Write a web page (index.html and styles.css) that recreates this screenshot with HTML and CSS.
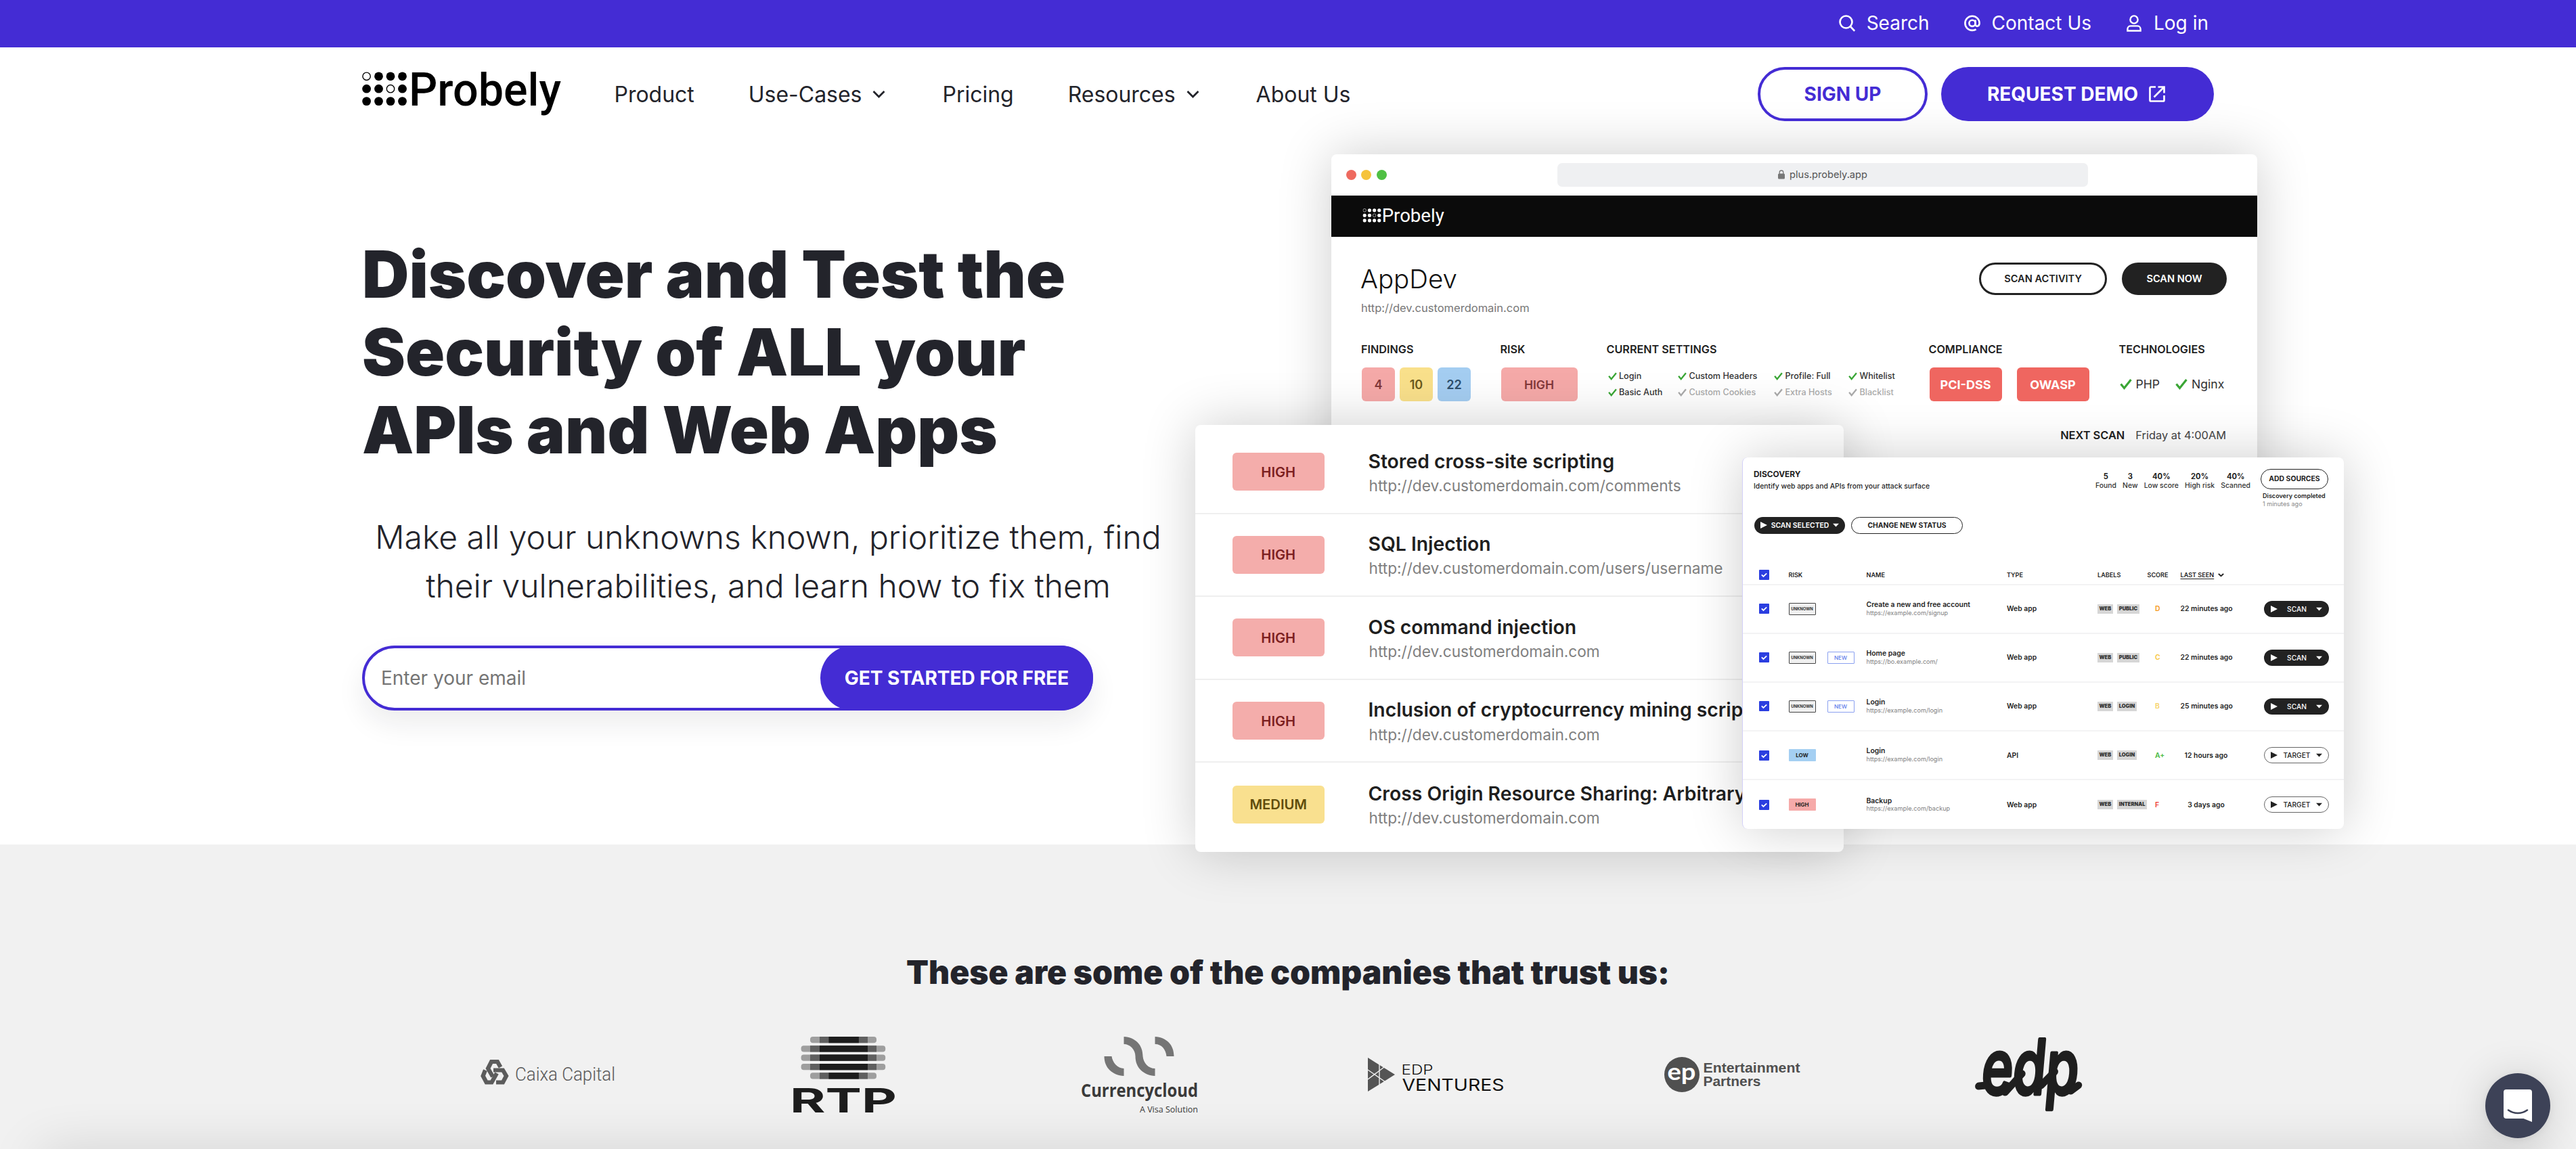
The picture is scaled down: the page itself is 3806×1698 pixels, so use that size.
FILE: index.html
```html
<!DOCTYPE html>
<html lang="en">
<head>
<meta charset="utf-8">
<title>Probely</title>
<link rel="stylesheet" href="styles.css">
</head>
<body>
<svg class="defs" aria-hidden="true">
  <symbol id="dots" viewBox="0 0 67 52">
    <g fill="currentColor">
      <circle cx="24.5" cy="6.8" r="6.4"/><circle cx="42" cy="6.8" r="6.4"/><circle cx="59.5" cy="6.8" r="6.4"/>
      <circle cx="6.6" cy="25.2" r="6.4"/><circle cx="24.5" cy="25.2" r="6.4"/><circle cx="59.5" cy="25.2" r="6.4"/>
      <circle cx="6.6" cy="43.6" r="6.4"/><circle cx="24.5" cy="43.6" r="6.4"/><circle cx="42" cy="43.6" r="6.4"/><circle cx="59.5" cy="43.6" r="6.4"/>
    </g>
    <g fill="none" stroke="currentColor" stroke-width="1.4"><circle cx="6.6" cy="6.8" r="5.7"/><circle cx="42" cy="25.2" r="5.7"/></g>
  </symbol>
  <symbol id="chev" viewBox="0 0 27 20"><path d="M5.5 6l8 8 8-8" fill="none" stroke="currentColor" stroke-width="2.8"/></symbol>
  <symbol id="tick" viewBox="0 0 18 18"><path d="M1.5 9.5l5 6L16.5 3" fill="none" stroke="currentColor" stroke-width="3.2"/></symbol>
  <symbol id="box" viewBox="0 0 15 15"><rect width="15" height="15" rx="1" fill="#2b3ee0"/><path d="M3.8 7.4l2.6 2.6 4.8-4.6" fill="none" stroke="#fff" stroke-width="1.8"/></symbol>
  <symbol id="play" viewBox="0 0 10 10"><path d="M0 0l10 5-10 5z" fill="currentColor"/></symbol>
  <symbol id="caret" viewBox="0 0 9 6"><path d="M0 .8h9L4.5 5.5z" fill="currentColor"/></symbol>
</svg>

<div class="topbar">
  <div class="container topbar-in">
    <a class="top-link"><svg width="24" height="25" viewBox="0 0 24 25" fill="none" stroke="#fff" stroke-width="2.6"><circle cx="10.5" cy="10.5" r="9"/><path d="M16.8 17l6.4 6.8"/></svg>Search</a>
    <a class="top-link"><svg width="24" height="25" viewBox="0 0 24 25" fill="none" stroke="#fff" stroke-width="2.6"><circle cx="12" cy="12.3" r="4.6"/><path d="M16.6 7.4v6.2c0 4.6 6 4 6-1.3A10.6 10.6 0 1 0 12 22.9c2.2 0 4-.5 5.6-1.5"/></svg>Contact Us</a>
    <a class="top-link"><svg width="24" height="25" viewBox="0 0 24 25" fill="none" stroke="#fff" stroke-width="2.4"><circle cx="12" cy="7" r="5.6"/><path d="M2.4 23.5v-2.5c0-3 2.4-4.6 4.6-4.6h10c2.2 0 4.6 1.6 4.6 4.6v2.5z"/></svg>Log in</a>
  </div>
</div>

<header class="header">
  <div class="container header-in">
    <svg class="logo" viewBox="0 0 296 66"><use href="#dots" width="67" height="52"/><text x="69" y="49.6" font-size="68" textLength="225" lengthAdjust="spacingAndGlyphs" class="logo-word">Probely</text></svg>
    <nav class="nav">
      <a>Product</a>
      <a>Use-Cases<svg class="chev"><use href="#chev"/></svg></a>
      <a>Pricing</a>
      <a>Resources<svg class="chev"><use href="#chev"/></svg></a>
      <a>About Us</a>
    </nav>
    <a class="btn btn-line">SIGN UP</a>
    <a class="btn btn-fill">REQUEST DEMO<svg width="24" height="24" viewBox="0 0 24 24" fill="none" stroke="#fff" stroke-width="2.7"><path d="M10 1.5H3a1.5 1.5 0 0 0-1.5 1.5v18A1.5 1.5 0 0 0 3 22.5h18a1.5 1.5 0 0 0 1.5-1.5v-7M13.5 1.5h9v9M22 2L7.5 16.5"/></svg></a>
  </div>
</header>

<section class="hero">
  <div class="container">
    <div class="pitch">
      <h1>Discover and Test the<br>Security of ALL your<br>APIs and Web Apps</h1>
      <p>Make all your unknowns known, prioritize them, find<br>their vulnerabilities, and learn how to fix them</p>
      <form class="signup">
        <input type="text" placeholder="Enter your email">
        <button type="button">GET STARTED FOR FREE</button>
      </form>
    </div>
  </div>

  <div class="win app">
    <div class="chrome">
      <div class="dots"><i class="r"></i><i class="y"></i><i class="g"></i></div>
      <div class="url"><svg width="10" height="14" viewBox="0 0 10 14"><rect y="5.5" width="10" height="8" rx="1.5" fill="#777"/><path d="M2.2 6V3.8a2.8 2.8 0 0 1 5.6 0V6" fill="none" stroke="#777" stroke-width="1.3"/></svg>plus.probely.app</div>
    </div>
    <div class="appbar"><svg class="logo-s" viewBox="0 0 296 66"><use href="#dots" width="67" height="52"/><text x="69" y="49.6" font-size="68" textLength="225" lengthAdjust="spacingAndGlyphs" class="logo-word">Probely</text></svg></div>
    <div class="app-body">
      <div class="app-top">
        <div class="app-name">AppDev</div>
        <span class="pill pill-o">SCAN ACTIVITY</span><span class="pill pill-f">SCAN NOW</span>
      </div>
      <div class="app-url">http://dev.customerdomain.com</div>
      <div class="app-cols">
        <div><h4>FINDINGS</h4><div class="tags"><b class="tag red">4</b><b class="tag yel">10</b><b class="tag blu">22</b></div></div>
        <div><h4>RISK</h4><div class="tags"><b class="tag red wide">HIGH</b></div></div>
        <div><h4>CURRENT SETTINGS</h4>
          <div class="settings">
            <span><svg><use href="#tick"/></svg>Login</span><span><svg><use href="#tick"/></svg>Custom Headers</span><span><svg><use href="#tick"/></svg>Profile: Full</span><span><svg><use href="#tick"/></svg>Whitelist</span>
            <span><svg><use href="#tick"/></svg>Basic Auth</span><span class="off"><svg><use href="#tick"/></svg>Custom Cookies</span><span class="off"><svg><use href="#tick"/></svg>Extra Hosts</span><span class="off"><svg><use href="#tick"/></svg>Blacklist</span>
          </div>
        </div>
        <div><h4>COMPLIANCE</h4><div class="tags comp"><b class="tag hot">PCI-DSS</b><b class="tag hot">OWASP</b></div></div>
        <div><h4>TECHNOLOGIES</h4><div class="tech"><span><svg><use href="#tick"/></svg>PHP</span><span><svg><use href="#tick"/></svg>Nginx</span></div></div>
      </div>
      <div class="next"><b>NEXT SCAN</b><span>Friday at 4:00AM</span></div>
    </div>
  </div>

  <div class="win findings">
    <div class="f-row"><b class="sev">HIGH</b><div><strong>Stored cross-site scripting</strong><small>http://dev.customerdomain.com/comments</small></div></div>
    <div class="f-row"><b class="sev">HIGH</b><div><strong>SQL Injection</strong><small>http://dev.customerdomain.com/users/username</small></div></div>
    <div class="f-row"><b class="sev">HIGH</b><div><strong>OS command injection</strong><small>http://dev.customerdomain.com</small></div></div>
    <div class="f-row"><b class="sev">HIGH</b><div><strong>Inclusion of cryptocurrency mining script</strong><small>http://dev.customerdomain.com</small></div></div>
    <div class="f-row"><b class="sev med">MEDIUM</b><div><strong>Cross Origin Resource Sharing: Arbitrary</strong><small>http://dev.customerdomain.com</small></div></div>
  </div>

  <div class="win disc">
    <div class="d-head">
      <div class="d-title"><b>DISCOVERY</b><span>Identify web apps and APIs from your attack surface</span></div>
      <div class="stats">
        <div><b>5</b>Found</div><div><b>3</b>New</div><div><b>40%</b>Low score</div><div><b>20%</b>High risk</div><div><b>40%</b>Scanned</div>
      </div>
      <div class="add"><span class="add-btn">ADD SOURCES</span><b>Discovery completed</b><small>1 minutes ago</small></div>
    </div>
    <div class="d-actions">
      <span class="d-sel"><svg class="play"><use href="#play"/></svg>SCAN SELECTED<svg class="caret"><use href="#caret"/></svg></span>
      <span class="d-chg">CHANGE NEW STATUS</span>
    </div>
    <div class="d-row d-th"><svg class="cb"><use href="#box"/></svg><span>RISK</span><span></span><span>NAME</span><span>TYPE</span><span>LABELS</span><span>SCORE</span><span class="seen-h"><u>LAST SEEN</u><svg width="9" height="6" viewBox="0 0 9 6"><path d="M.8 1l3.7 3.2L8.2 1" fill="none" stroke="#222" stroke-width="1.9"/></svg></span><span></span></div>
    <div class="d-row"><svg class="cb"><use href="#box"/></svg><span class="bdg unk">UNKNOWN</span><i></i><div class="nm"><b>Create a new and free account</b><small>https://example.com/signup</small></div><span>Web app</span><span class="lbls"><b>WEB</b><b>PUBLIC</b></span><span class="sc o">D</span><span class="seen">22 minutes ago</span><span class="run"><svg class="play"><use href="#play"/></svg>SCAN<svg class="caret"><use href="#caret"/></svg></span></div>
    <div class="d-row"><svg class="cb"><use href="#box"/></svg><span class="bdg unk">UNKNOWN</span><span class="bdg new">NEW</span><div class="nm"><b>Home page</b><small>https://bo.example.com/</small></div><span>Web app</span><span class="lbls"><b>WEB</b><b>PUBLIC</b></span><span class="sc c">C</span><span class="seen">22 minutes ago</span><span class="run"><svg class="play"><use href="#play"/></svg>SCAN<svg class="caret"><use href="#caret"/></svg></span></div>
    <div class="d-row"><svg class="cb"><use href="#box"/></svg><span class="bdg unk">UNKNOWN</span><span class="bdg new">NEW</span><div class="nm"><b>Login</b><small>https://example.com/login</small></div><span>Web app</span><span class="lbls"><b>WEB</b><b>LOGIN</b></span><span class="sc b">B</span><span class="seen">25 minutes ago</span><span class="run"><svg class="play"><use href="#play"/></svg>SCAN<svg class="caret"><use href="#caret"/></svg></span></div>
    <div class="d-row"><svg class="cb"><use href="#box"/></svg><span class="bdg low">LOW</span><i></i><div class="nm"><b>Login</b><small>https://example.com/login</small></div><span>API</span><span class="lbls"><b>WEB</b><b>LOGIN</b></span><span class="sc a">A+</span><span class="seen">12 hours ago</span><span class="run tgt"><svg class="play"><use href="#play"/></svg>TARGET<svg class="caret"><use href="#caret"/></svg></span></div>
    <div class="d-row"><svg class="cb"><use href="#box"/></svg><span class="bdg high">HIGH</span><i></i><div class="nm"><b>Backup</b><small>https://example.com/backup</small></div><span>Web app</span><span class="lbls"><b>WEB</b><b>INTERNAL</b></span><span class="sc f">F</span><span class="seen">3 days ago</span><span class="run tgt"><svg class="play"><use href="#play"/></svg>TARGET<svg class="caret"><use href="#caret"/></svg></span></div>
  </div>
</section>

<section class="trust">
  <h2>These are some of the companies that trust us:</h2>
  <div class="brands">
    <svg width="200" height="48" viewBox="-1 2 200 48">
      <g fill="none" stroke="#5c5c5c" stroke-width="6.2"><path d="M29.5 15L25 7H16L11 17l7 12"/><path d="M19 19.5h14l5 8.5-5 9.5H23"/><path d="M7 19.5L3.6 28l5 9.5H16.5L24 24"/></g>
      <text x="51" y="34.5" font-family="Roboto" font-weight="300" font-size="27.5" fill="#5a5a5a" textLength="148" lengthAdjust="spacingAndGlyphs">Caixa Capital</text>
    </svg>
    <svg width="151" height="112" viewBox="0 0 151 112">
      <g fill="#9e9e9e"><rect x="26" y="0" width="98" height="9.2" rx="4"/><rect x="12.6" y="13.2" width="124.6" height="9.2" rx="4"/><rect x="12.6" y="26.5" width="124.6" height="9.2" rx="4"/><rect x="12.6" y="40" width="124.6" height="9.2" rx="4"/><rect x="26" y="53.2" width="98" height="9.2" rx="4"/></g>
      <path fill="#5f5f5f" d="M40 0h71v9.200H40zM26 13.200h98v9.200H26zM26 26.500h98v9.200H26zM26 40h98v9.200H26zM40 53.200h71v9.200H40z"/>
      <path fill="#1d1d1d" d="M53.500 0h44.400v9.200H53.500zM40 13.200h71v9.200H40zM40 26.500h71v9.200H40zM40 40h71v9.200H40zM53.500 53.200h44.400v9.200H53.500z"/>
      <text x="-4" y="112" font-family="Inter" font-weight="700" font-size="50" fill="#1d1d1d" textLength="158" lengthAdjust="spacingAndGlyphs">RTP</text>
    </svg>
    <svg width="174" height="116" viewBox="0 -2 174 116">
      <g fill="#757575" transform="translate(34.5 0)"><path d="M0 29h11c1 9 9 18 18 18v11C12 57 0 46 0 29z"/><path d="M29 0c17 1 28 12 28 29 1 10 8 18 18 18v11C58 57 46 46 46 29 46 19 38 11 29 11z"/><path d="M75 0c17 1 28 12 28 29H92C91 19 85 11 75 11z"/></g>
      <text x="0" y="88.5" font-family="Open Sans" font-weight="700" font-size="26" fill="#3a3a3a" textLength="173" lengthAdjust="spacingAndGlyphs">Currencycloud</text>
      <text x="87" y="112" font-family="Open Sans" font-size="12" fill="#3a3a3a" textLength="86" lengthAdjust="spacingAndGlyphs">A Visa Solution</text>
    </svg>
    <svg width="202" height="56" viewBox="0 -3 202 56">
      <path d="M0 0l40 25L0 50z" fill="#545454"/><path d="M17 10v30M0 18l26 18M0 32l24-18" stroke="#f1f1f1" stroke-width="1.4"/>
      <text x="49.500" y="24.500" font-family="Inter" font-weight="300" font-size="20.500" fill="#111" textLength="47" lengthAdjust="spacingAndGlyphs">EDP</text>
      <text x="50.500" y="49" font-family="Inter" font-weight="400" font-size="24.300" fill="#111" textLength="151" lengthAdjust="spacingAndGlyphs">VENTURES</text>
    </svg>
    <svg width="201" height="60" viewBox="0 -4 201 60">
      <circle cx="26" cy="26" r="26" fill="#505050"/>
      <text x="4.500" y="33.500" font-family="Lato" font-weight="700" font-size="35" fill="#fff" textLength="42" lengthAdjust="spacingAndGlyphs">ep</text>
      <text x="57.500" y="22.500" font-family="Liberation Sans" font-weight="700" font-size="20.500" fill="#505050" textLength="143" lengthAdjust="spacingAndGlyphs">Entertainment</text>
      <text x="57.500" y="42.800" font-family="Liberation Sans" font-weight="700" font-size="20.500" fill="#505050" textLength="85" lengthAdjust="spacingAndGlyphs">Partners</text>
    </svg>
    <svg width="156" height="112" viewBox="0 0 156 112" class="edp">
      <g transform="translate(7 0) skewX(-5)" fill="#1f1f1f" stroke="#1f1f1f" stroke-linejoin="round" stroke-linecap="round">
        <text x="7" y="85" font-family="Inter" font-weight="500" font-size="112" stroke-width="5" textLength="143" lengthAdjust="spacingAndGlyphs">edp</text>
        <path d="M4 73l10-1M44 82l22-27M96 72l18-20M141 80l10-8" fill="none" stroke-width="11"/>
      </g>
    </svg>
  </div>
</section>

<div class="sheet-clip"><div class="sheet"></div></div>
<div class="chat"><svg width="96" height="96" viewBox="0 0 96 96"><path d="M31 24h34a4 4 0 0 1 4 4v44l-12.500-5H31a4 4 0 0 1-4-4V28a4 4 0 0 1 4-4z" fill="#fff"/><path d="M34 54.500c8.500 6 19.500 6 28 0" fill="none" stroke="#3d4257" stroke-width="2.600" stroke-linecap="round"/></svg></div>
</body>
</html>
```

FILE: styles.css
```css
* { box-sizing: border-box; }
body { margin: 0; width: 3806px; height: 1698px; overflow: hidden; position: relative; background: #fff; color: #23242b; font-family: Inter, "Liberation Sans", sans-serif; }
.defs { position: absolute; width: 0; height: 0; }
.container { width: 2736px; margin: 0 auto; }
.logo-word { font-family: Roboto, sans-serif; font-weight: 500; fill: currentColor; }

.topbar { height: 70px; background: #442cd4; color: #fff; }
.topbar-in { display: flex; justify-content: flex-end; align-items: center; gap: 51px; height: 68px; padding-right: 8px; font-size: 28px; }
.top-link { display: flex; align-items: center; gap: 17px; }

.header { position: relative; z-index: 2; }
.header-in { display: flex; align-items: center; height: 138px; }
.logo { width: 296px; height: 66px; color: #000; flex: none; }
.nav { display: flex; gap: 80px; flex: 1; margin-left: 76.5px; font-size: 32px; letter-spacing: -.02px; }
.nav a { display: flex; align-items: center; white-space: nowrap; }
.chev { width: 27px; height: 20px; margin-left: 12px; }
.btn { display: flex; align-items: center; justify-content: center; height: 80px; border-radius: 40px; font-size: 28px; font-weight: 700; white-space: nowrap; }
.btn-line { width: 251px; border: 4px solid #442cd4; color: #442cd4; }
.btn-fill { width: 403px; margin-left: 20px; padding-right: 4px; gap: 16px; background: #442cd4; color: #fff; }

.hero { position: relative; z-index: 1; height: 1040px; }
.pitch { width: 1200px; padding-top: 140px; }
h1 { margin: 0; font-size: 96px; line-height: 1.2; font-weight: 900; white-space: nowrap; }
.pitch p { margin: 64px 0 52px; font-size: 48px; line-height: 72px; font-weight: 300; text-align: center; white-space: nowrap; }
.signup { display: flex; width: 1080px; height: 96px; border-radius: 48px; border: 4px solid #442cd4; background: #fff; box-shadow: 0 20px 40px rgba(20, 30, 40, .08); }
.signup input { flex: 1; min-width: 0; border: 0; outline: 0; background: none; padding: 0 0 0 24px; font: 400 28px Inter, sans-serif; color: #23242b; }
.signup input::placeholder { color: #757575; }
.signup button { width: 403px; height: 96px; margin: -4px; border: 0; border-radius: 48px; background: #442cd4; color: #fff; font: 700 28px Inter, sans-serif; padding: 0; white-space: nowrap; }

.win { position: absolute; background: #fff; border-radius: 8px; box-shadow: 0 0 80px rgba(0, 0, 0, .2); color: #1f1f1f; white-space: nowrap; }

/* scan overview window */
.app { left: 1967px; top: 20px; width: 1368px; height: 700px; }
.chrome { display: grid; grid-template-columns: 334px 784px 1fr; align-items: center; height: 61px; }
.dots { display: flex; gap: 7.7px; padding-left: 21.5px; }
.dots i { width: 15px; height: 15px; border-radius: 50%; }
.dots .r { background: #ee6a5f; }
.dots .y { background: #f5c33b; }
.dots .g { background: #4fc043; }
.url { display: flex; align-items: center; justify-content: center; gap: 7px; height: 35px; border-radius: 7px; background: #eff0f2; font-size: 14.6px; color: #555; padding-bottom: 2px; }
.appbar { height: 61px; background: #0b0b0b; color: #fff; padding: 19px 0 0 46px; }
.logo-s { display: block; width: 122px; height: 27px; }
.logo-s .logo-word { font-weight: 400; }
.app-body { padding: 38px 45px 0; }
.app-top { display: flex; align-items: center; height: 48px; }
.app-name { flex: 1; font-size: 38.5px; font-weight: 350; margin-left: -2px; color: #111; }
.pill { display: flex; align-items: center; justify-content: center; height: 48px; border-radius: 24px; font-size: 14.6px; font-weight: 600; padding-bottom: 1px; }
.pill-o { width: 189px; border: 3.5px solid #222; background: #fff; }
.pill-f { width: 155px; margin-left: 22px; background: #222; color: #fff; }
.app-url { margin-top: 9px; margin-left: -1px; font-size: 16.5px; line-height: 20px; color: #777; }
.app-cols { display: grid; grid-template-columns: 205.5px 157px 476px 281px auto; margin-top: 41px; }
h4 { margin: 0 0 17px -1px; font-size: 16.2px; line-height: 20px; font-weight: 600; }
.tags { display: flex; gap: 7px; }
.comp { gap: 22px; }
.tag { display: flex; align-items: center; justify-content: center; width: 49px; height: 50px; border-radius: 6px; font-size: 18px; font-weight: 600; }
.red { background: #f5a9a8; color: #82383a; }
.yel { background: #f9e08b; color: #6b5a1c; }
.blu { background: #a4cdf1; color: #2e506e; }
.wide { width: 113px; font-size: 17.5px; }
.hot { width: 107px; background: #ef6660; color: #fff; font-weight: 700; }
.settings { display: grid; grid-template-columns: 103.5px 142px 110px auto; grid-auto-rows: 24.6px; padding-left: 1px; }
.settings span { display: flex; align-items: center; gap: 3.5px; font-size: 12.6px; font-weight: 500; color: #333; }
.settings svg { width: 13px; height: 13px; color: #3aa635; }
.settings .off, .settings .off svg { color: #aaa; }
.tech { display: flex; gap: 23px; height: 48px; align-items: center; font-size: 17.6px; color: #333; }
.tech span { display: flex; align-items: center; gap: 6px; }
.tech svg { width: 18px; height: 18px; color: #3aa635; }
.next { display: flex; justify-content: flex-end; gap: 16px; margin-top: 40px; margin-right: 1px; line-height: 20px; font-size: 16.4px; color: #444; }
.next b { font-weight: 600; color: #1f1f1f; }

/* findings list */
.findings { left: 1766px; top: 420px; width: 958px; height: 631px; padding-top: 9px; }
.f-row { display: flex; align-items: center; height: 122.6px; padding-left: 55px; border-bottom: 2px solid #efefef; }
.f-row:last-child { border: 0; }
.sev { display: flex; align-items: center; justify-content: center; width: 135.5px; height: 56px; margin-right: 65px; flex: none; border-radius: 6px; background: #f4adab; color: #7c1f1f; font-size: 20.2px; font-weight: 600; }
.med { background: #f9e08f; color: #604c0c; }
.f-row div { padding-top: 5px; }
.f-row strong { display: block; font-size: 28.3px; line-height: 35.3px; font-weight: 600; }
.f-row small { display: block; font-size: 22.65px; line-height: 35.3px; color: #808080; margin-left: 1px; }

/* discovery table */
.disc { left: 2574px; top: 468px; width: 889px; height: 549px; border-left: 1px solid #d3d0f8; font-size: 10.4px; }
.d-head { display: flex; height: 88px; padding: 15.5px 23px 0 16px; }
.d-title { flex: 1; line-height: 18.7px; }
.d-title b { display: block; font-size: 11.9px; }
.d-title span { display: block; font-weight: 500; }
.stats { display: flex; gap: 9.2px; padding-top: 6px; margin-right: 15px; text-align: center; line-height: 13.3px; font-weight: 500; color: #333; }
.stats b { display: block; font-size: 11.2px; color: #1f1f1f; }
.add { width: 100px; padding-top: 1.5px; font-size: 9.05px; line-height: 11.5px; }
.add-btn { display: flex; align-items: center; justify-content: center; height: 30px; margin-bottom: 4px; border: 1.5px solid #222; border-radius: 15px; font-size: 10.4px; font-weight: 700; }
.add b, .add small { display: block; margin-left: 3px; font-size: 9.05px; font-weight: 600; }
.add small { font-weight: 400; color: #888; }
.d-actions { display: flex; gap: 9px; padding-left: 17px; font-size: 10.4px; }
.d-sel, .d-chg { display: flex; align-items: center; justify-content: center; height: 24.5px; border-radius: 13px; }
.d-sel { width: 134px; background: #222; color: #fff; gap: 5.5px; font-weight: 600; }
.d-chg { width: 165px; border: 1.5px solid #222; font-weight: 700; }
.play { width: 10px; height: 10px; }
.caret { width: 9px; height: 6px; }
.d-row { display: grid; grid-template-columns: 44px 57px 58px 207.5px 134px 73.5px 49px 76px 1fr; align-items: center; height: 72.2px; padding: 0 22px 0 23.5px; border-bottom: 2px solid #f3f3f4; font-weight: 600; }
.d-row:last-child { border: 0; }
.d-th { height: 28px; margin-top: 48px; font-size: 9.1px; }
.cb { width: 15px; height: 15px; }
.seen-h { display: flex; align-items: center; gap: 6px; }
.seen-h svg { flex: none; }
.seen-h u { text-underline-offset: 2px; }
.bdg { display: flex; align-items: center; justify-content: center; width: 40px; height: 18px; font-size: 8px; font-weight: 700; border-radius: 1px; }
.unk { border: 1.5px solid #444; background: #f0f0f0; color: #333; font-size: 5.9px; }
.new { border: 1px solid #8aa0f0; color: #5c7bea; font-weight: 500; }
.low { background: #a4cff2; }
.high { background: #f6aaa9; }
.nm { line-height: 11.7px; }
.nm b { display: block; font-weight: 600; }
.nm small { display: block; font-size: 9.15px; font-weight: 400; color: #808080; }
.lbls { display: flex; gap: 6.5px; }
.lbls b { padding: 0 2.5px; line-height: 14px; background: #d6d6d6; color: #333; font-size: 7.5px; }
.sc { padding-left: 11.5px; font-weight: 600; }
.o { color: #f59a23; }
.c { color: #f8c63e; }
.b { color: #f7d36b; }
.a { color: #45b83d; }
.f { color: #ee3d35; }
.seen { text-align: center; }
.run { display: flex; align-items: center; justify-content: space-between; justify-self: end; width: 96px; height: 24px; padding: 0 10px; border-radius: 12px; background: #222; color: #fff; font-size: 10.2px; font-weight: 500; }
.tgt { background: #fff; color: #222; border: 1.5px solid #666; padding: 0 8.5px; }

.trust { height: 450px; padding-top: 160px; background: #f1f1f1; }
h2 { margin: 0 0 64px; font-size: 48px; line-height: 58px; font-weight: 900; text-align: center; }
.brands { display: grid; grid-template-columns: repeat(6, 437.6px); justify-content: center; align-items: center; justify-items: center; height: 110px; }
.brands svg { overflow: visible; }

/* soft edge of the sheet docked under the viewport */
.sheet-clip { position: absolute; left: 0; right: 0; bottom: 0; height: 110px; overflow: hidden; z-index: 3; }
.sheet { height: 40px; margin: 120px 60px 0; box-shadow: 0 0 80px rgba(0, 0, 0, .2); }
.chat { position: absolute; left: 3672px; top: 1586px; width: 96px; height: 96px; border-radius: 50%; background: #3d4257; box-shadow: 0 2px 12px rgba(0, 0, 0, .06), 0 4px 64px rgba(0, 0, 0, .16); z-index: 4; }
.chat svg { display: block; }
```
